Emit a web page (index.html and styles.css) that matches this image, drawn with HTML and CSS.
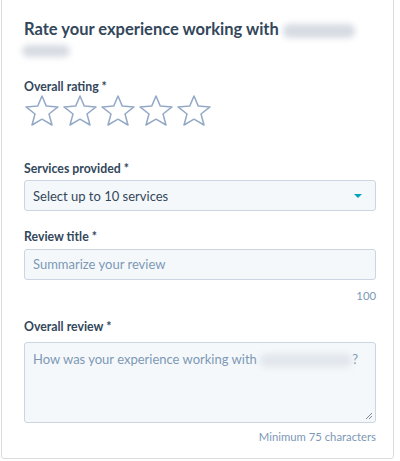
FILE: index.html
```html
<!DOCTYPE html>
<html lang="en">
<head>
    <meta charset="UTF-8">
    <meta name="viewport" content="width=device-width, initial-scale=1.0">
    <title>Write a Review</title>
    <link rel="stylesheet" href="styles.css">
</head>
<body>
    <div class="review-card">
        <h2 class="review-title">Rate your experience working with <span class="blur blur-name"></span> <span class="blur blur-name2"></span></h2>

        <div class="field rating">
            <label class="field-label">Overall rating *</label>
            <div class="stars">
                <svg class="star" viewBox="0 0 36 31"><path d="M18 1 L22.3 11.1 L34 11.9 L25 19 L28 30 L18 24.2 L8 30 L11 19 L2 11.9 L13.7 11.1 Z"/></svg>
                <svg class="star" viewBox="0 0 36 31"><path d="M18 1 L22.3 11.1 L34 11.9 L25 19 L28 30 L18 24.2 L8 30 L11 19 L2 11.9 L13.7 11.1 Z"/></svg>
                <svg class="star" viewBox="0 0 36 31"><path d="M18 1 L22.3 11.1 L34 11.9 L25 19 L28 30 L18 24.2 L8 30 L11 19 L2 11.9 L13.7 11.1 Z"/></svg>
                <svg class="star" viewBox="0 0 36 31"><path d="M18 1 L22.3 11.1 L34 11.9 L25 19 L28 30 L18 24.2 L8 30 L11 19 L2 11.9 L13.7 11.1 Z"/></svg>
                <svg class="star" viewBox="0 0 36 31"><path d="M18 1 L22.3 11.1 L34 11.9 L25 19 L28 30 L18 24.2 L8 30 L11 19 L2 11.9 L13.7 11.1 Z"/></svg>
            </div>
        </div>

        <div class="field services">
            <label class="field-label">Services provided *</label>
            <div class="select-box">
                <span>Select up to 10 services</span>
                <span class="caret"></span>
            </div>
        </div>

        <div class="field review-name">
            <label class="field-label">Review title *</label>
            <div class="input-box placeholder">Summarize your review</div>
            <div class="field-hint">100</div>
        </div>

        <div class="field review-body">
            <label class="field-label">Overall review *</label>
            <div class="textarea-box">
                <span class="placeholder">How was your experience working with <span class="blur blur-inline"></span>?</span>
                <svg class="resize" viewBox="0 0 10 10"><path d="M9 3 L3 9 M9 6 L6 9"/></svg>
            </div>
            <div class="field-hint min-hint">Minimum 75 characters</div>
        </div>
    </div>
</body>
</html>
```

FILE: styles.css
```css
body {
    font-family: Lato, "Open Sans", sans-serif;
    background-color: #fff;
    color: #33475b;
    margin: 0;
    padding: 0;
}

.review-card {
    width: 393px;
    height: 460px;
    box-sizing: border-box;
    margin-left: 1px;
    margin-top: -1px;
    padding: 19px 16px 0 22px;
    border: 1px solid #d9dcdf;
    border-radius: 0 0 3px 3px;
    background-color: #fff;
}

.review-title {
    margin: 0;
    font-size: 16.5px;
    font-weight: 700;
    line-height: 20px;
    color: #33475b;
}

.blur {
    display: inline-block;
    background-color: #d6dbe2;
    border-radius: 6px;
    filter: blur(3px);
    vertical-align: middle;
}

.blur-name {
    width: 72px;
    height: 14px;
}

.blur-name2 {
    width: 48px;
    height: 12px;
    margin-left: -2px;
}

.blur-inline {
    width: 92px;
    height: 13px;
    background-color: #e1e6ec;
}

.field-label {
    display: block;
    font-size: 12.3px;
    font-weight: 700;
    line-height: 16px;
}

.rating {
    margin-top: 20px;
}

.stars {
    display: flex;
    gap: 2px;
}

.star {
    width: 36px;
    height: 31px;
}

.star path {
    fill: none;
    stroke: #94a9c6;
    stroke-width: 1.5;
    stroke-linejoin: round;
}

.services {
    margin-top: 35px;
}

.review-name {
    margin-top: 18px;
}

.review-body {
    margin-top: 15px;
}

.select-box,
.input-box,
.textarea-box {
    box-sizing: border-box;
    width: 352px;
    background-color: #f5f8fa;
    border: 1px solid #cbd6e2;
    border-radius: 3px;
    font-size: 13px;
    padding: 0 8px;
}

.select-box {
    display: flex;
    align-items: center;
    justify-content: space-between;
    height: 31px;
    margin-top: 3px;
    padding-right: 13px;
}

.caret {
    width: 0;
    height: 0;
    border-left: 4px solid transparent;
    border-right: 4px solid transparent;
    border-top: 4px solid #00a4bd;
}

.input-box {
    height: 31px;
    line-height: 29px;
    margin-top: 4px;
}

.placeholder {
    color: #7c98b6;
}

.field-hint {
    text-align: right;
    width: 352px;
    font-size: 11.3px;
    line-height: 16px;
    color: #7c98b6;
    margin-top: 8px;
}

.min-hint {
    margin-top: 6px;
}

.textarea-box {
    position: relative;
    height: 81px;
    margin-top: 7px;
    padding-top: 7px;
    line-height: 18px;
}

.resize {
    position: absolute;
    right: 2px;
    bottom: 2px;
    width: 10px;
    height: 10px;
}

.resize path {
    stroke: #7a8899;
    stroke-width: 1;
    fill: none;
}
```
